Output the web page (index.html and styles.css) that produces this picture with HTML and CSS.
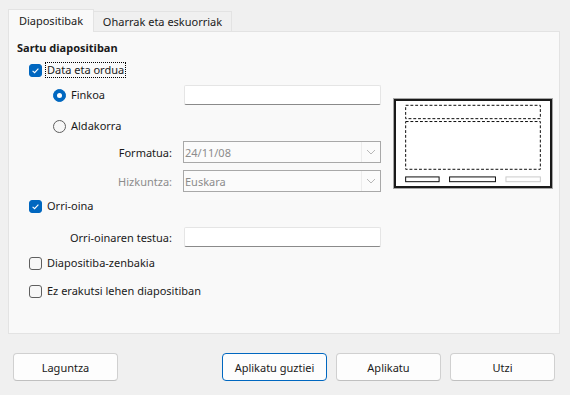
FILE: index.html
```html
<!DOCTYPE html>
<html>
<head>
<meta charset="utf-8">
<link rel="stylesheet" href="styles.css">
</head>
<body>
<div class="dialog">
  <div class="tabs">
    <div class="tab active">Diapositibak</div>
    <div class="tab">Oharrak eta eskuorriak</div>
  </div>
  <div class="panel">
    <div class="form">
      <div class="title">Sartu diapositiban</div>
      <div class="row r-data">
        <span class="cb on"><svg viewBox="0 0 13 13" width="13" height="13"><path d="M3.6 6.8 L5.6 8.7 L9.4 4.6" fill="none" stroke="#fff" stroke-width="1.1"/></svg></span>
        <span class="lbl focus">Data eta ordua</span>
      </div>
      <div class="row r-fix">
        <span class="radio-box"><span class="radio on"></span><span class="lbl">Finkoa</span></span>
        <span class="input"></span>
      </div>
      <div class="row r-var">
        <span class="radio-box"><span class="radio"></span><span class="lbl">Aldakorra</span></span>
      </div>
      <div class="row field r-fmt">
        <span class="flabel">Formatua:</span>
        <span class="select"><span class="sval">24/11/08</span><span class="chev"><svg width="10" height="6" viewBox="0 0 10 6"><path d="M1 1 L5 5 L9 1" fill="none" stroke="#b8b8b8" stroke-width="1"/></svg></span></span>
      </div>
      <div class="row field r-lang">
        <span class="flabel dis">Hizkuntza:</span>
        <span class="select"><span class="sval">Euskara</span><span class="chev"><svg width="10" height="6" viewBox="0 0 10 6"><path d="M1 1 L5 5 L9 1" fill="none" stroke="#b8b8b8" stroke-width="1"/></svg></span></span>
      </div>
      <div class="row r-foot">
        <span class="cb on"><svg viewBox="0 0 13 13" width="13" height="13"><path d="M3.6 6.8 L5.6 8.7 L9.4 4.6" fill="none" stroke="#fff" stroke-width="1.1"/></svg></span>
        <span class="lbl">Orri-oina</span>
      </div>
      <div class="row field r-ftext">
        <span class="flabel">Orri-oinaren testua:</span>
        <span class="input"></span>
      </div>
      <div class="row r-num">
        <span class="cb"></span>
        <span class="lbl">Diapositiba-zenbakia</span>
      </div>
      <div class="row r-first">
        <span class="cb"></span>
        <span class="lbl">Ez erakutsi lehen diapositiban</span>
      </div>
    </div>
    <div class="preview">
      <svg width="158" height="89" viewBox="0 0 158 89">
        <rect x="8.5" y="4.5" width="141" height="14" fill="none" stroke="#000" stroke-width="1" stroke-dasharray="3 2"/>
        <rect x="8.5" y="21.5" width="141" height="50" fill="none" stroke="#000" stroke-width="1" stroke-dasharray="3 2"/>
        <rect x="8.5" y="79.5" width="35" height="5" fill="none" stroke="#000" stroke-width="1"/>
        <rect x="54.5" y="79.5" width="48" height="5" fill="none" stroke="#000" stroke-width="1"/>
        <rect x="113.5" y="79.5" width="36" height="5" fill="none" stroke="#c8c8c8" stroke-width="1"/>
      </svg>
    </div>
  </div>
  <div class="buttons">
    <span class="btn">Laguntza</span>
    <span class="spacer"></span>
    <span class="btn default">Aplikatu guztiei</span>
    <span class="btn">Aplikatu</span>
    <span class="btn">Utzi</span>
  </div>
</div>
</body>
</html>
```
FILE: styles.css
```css
html, body {
  margin: 0;
  padding: 0;
  background: #f0f0f0;
}
body {
  font-family: "Noto Sans", "Open Sans", sans-serif;
  font-size: 11px;
  color: #1a1a1a;
}
.dialog {
  width: 570px;
  height: 395px;
  box-sizing: border-box;
  padding: 9px 10px 0 8px;
}
.tabs {
  display: flex;
  align-items: flex-end;
  height: 23px;
  position: relative;
  z-index: 1;
  margin-bottom: -1px;
}
.tab {
  box-sizing: border-box;
  height: 20px;
  border: 1px solid #e3e3e3;
  border-bottom: none;
  padding: 0;
  display: flex;
  align-items: center;
  justify-content: center;
  white-space: nowrap;
  background: #f0f0f0;
  margin-bottom: 1px;
  width: 138px;
}
.tab.active {
  height: 23px;
  background: #f9f9f9;
  margin-bottom: 0;
  padding-bottom: 1px;
  width: 86px;
}
.tab + .tab {
  border-left: none;
}
.panel {
  box-sizing: border-box;
  height: 303px;
  border: 1px solid #e3e3e3;
  background: #f9f9f9;
  display: flex;
}
.form {
  width: 385px;
  box-sizing: border-box;
  padding: 6px 0 0 8px;
}
.title {
  font-weight: bold;
  height: 20px;
  line-height: 20px;
}
.row {
  display: flex;
  align-items: center;
  height: 20px;
}
.cb {
  box-sizing: border-box;
  width: 13px;
  height: 13px;
  border: 1px solid #5f5f5f;
  border-radius: 3px;
  background: #f7f7f7;
  margin-left: 12px;
  margin-right: 4px;
  display: flex;
}
.cb.on {
  background: #0067c0;
  border-color: #0067c0;
}
.cb svg {
  margin: -1px;
}
.lbl {
  line-height: 14px;
  padding: 0 1px;
}
.focus {
  outline: 1px dotted #000;
  outline-offset: 0;
}
.r-data { margin-top: 2px; }
.r-fix { margin-top: 5px; }
.r-var { margin-top: 11px; }
.r-fmt { margin-top: 5px; height: 22px; }
.r-lang { margin-top: 7px; height: 22px; }
.r-foot { margin-top: 4px; }
.r-ftext { margin-top: 11px; }
.r-num { margin-top: 6px; }
.r-first { margin-top: 8px; }

.radio-box {
  display: flex;
  align-items: center;
  width: 131px;
  margin-left: 36px;
}
.radio {
  box-sizing: border-box;
  width: 13px;
  height: 13px;
  border-radius: 50%;
  border: 1px solid #5f5f5f;
  background: #f7f7f7;
  margin-right: 4px;
  display: flex;
  align-items: center;
  justify-content: center;
}
.radio.on {
  background: #0067c0;
  border-color: #0067c0;
}
.radio.on::after {
  content: "";
  width: 5px;
  height: 5px;
  border-radius: 50%;
  background: #fff;
}
.input {
  box-sizing: border-box;
  width: 197px;
  height: 20px;
  background: #fff;
  border: 1px solid #e5e5e5;
  border-bottom-color: #8a8a8a;
  border-radius: 2px;
}
.field .flabel {
  width: 155px;
  text-align: right;
  margin-right: 12px;
}
.flabel.dis { color: #8c8c8c; }
.r-fmt .flabel, .r-lang .flabel { margin-right: 11px; }
.select {
  box-sizing: border-box;
  width: 198px;
  height: 22px;
  border: 1px solid #a8a8a8;
  background: #fbfbfb;
  display: flex;
  align-items: center;
  color: #8c8c8c;
}
.sval {
  flex: 1;
  padding-left: 1px;
}
.chev {
  width: 18px;
  height: 20px;
  border-left: 1px solid #ececec;
  display: flex;
  align-items: center;
  justify-content: center;
}
.preview {
  margin-top: 67px;
  width: 158px;
  height: 89px;
  box-sizing: border-box;
}
.preview svg {
  display: block;
  box-sizing: border-box;
  width: 158px;
  height: 89px;
  background: #fff;
  border: 2px solid #1a1a1a;
  outline: 1px solid #a6a6a6;
  overflow: visible;
}
.buttons {
  display: flex;
  margin-top: 19px;
  padding: 0 5px;
  gap: 9px;
}
.spacer { flex: 1; }
.btn {
  box-sizing: border-box;
  width: 105px;
  height: 28px;
  border: 1px solid #d0d0d0;
  border-bottom-color: #c0c0c0;
  border-radius: 4px;
  background: #fdfdfd;
  display: flex;
  align-items: center;
  justify-content: center;
}
.btn.default {
  border-color: #0067c0;
}
```
